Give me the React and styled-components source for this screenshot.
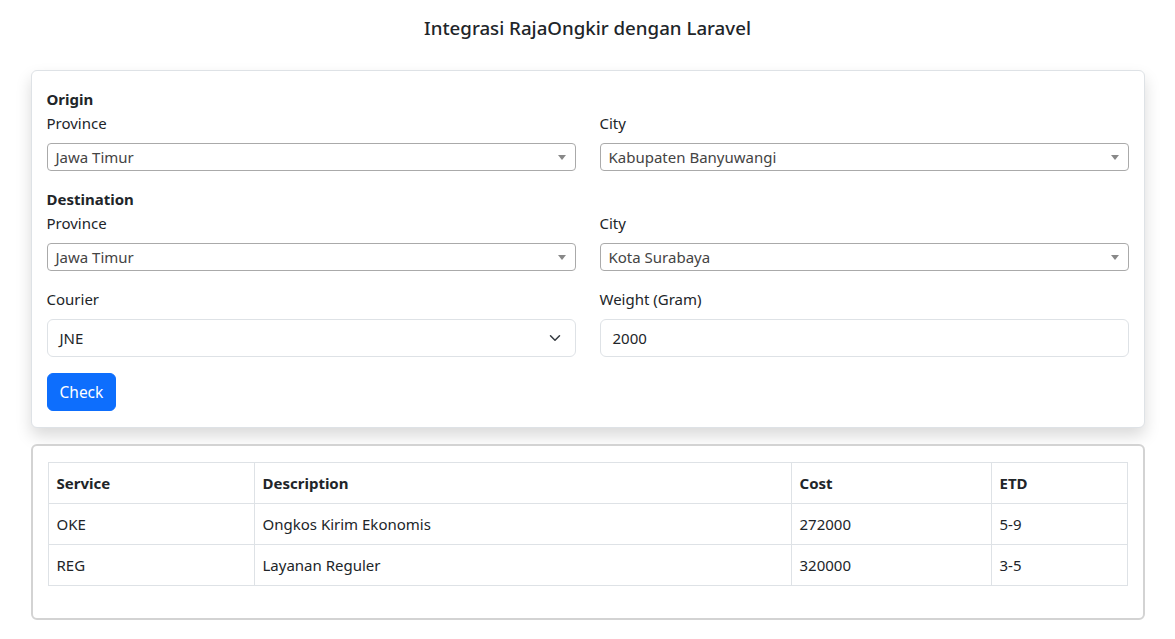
import React from "react";
import styled, { createGlobalStyle } from "styled-components";

const Global = createGlobalStyle`
  html, body { margin: 0; padding: 0; background: #fff; }
  body {
    font-family: "Noto Sans", "Open Sans", sans-serif;
    font-size: 15px;
    line-height: 24px;
    color: #212529;
  }
  * { box-sizing: border-box; }
`;

const Page = styled.div`
  width: 1114px;
  margin: 0 auto;
  padding-top: 16px;
`;

const Title = styled.h1`
  margin: 0 0 30px;
  text-align: center;
  font-size: 18.7px;
  font-weight: 500;
  line-height: 24px;
  color: #212529;
`;

const Card = styled.div`
  background: #fff;
  border: ${(p) => (p.$outline ? "2px solid #d3d3d3" : "1px solid #dee2e6")};
  border-radius: 6px;
  box-shadow: ${(p) => (p.$shadow ? "0 .5rem 1rem rgba(0,0,0,.15)" : "none")};
  padding: ${(p) => (p.$outline ? "16px 15px 16px" : "16px 15px")};
  margin-bottom: 16px;
`;

const Grid = styled.div`
  display: grid;
  grid-template-columns: 1fr 1fr;
  column-gap: 24px;
  margin-top: ${(p) => p.$mt || 0}px;
`;

const Heading = styled.div`
  font-weight: 700;
  margin-top: ${(p) => p.$mt || 0}px;
`;

const Field = styled.div`
  display: flex;
  flex-direction: column;
`;

const Label = styled.label`
  margin-bottom: 8px;
`;

const Select2 = styled.div`
  position: relative;
  height: 28px;
  border: 1px solid #aaa;
  border-radius: 4px;
  padding-left: 8px;
  line-height: 26px;
  color: #444;
  &::after {
    content: "";
    position: absolute;
    right: 9px;
    top: 11px;
    border-style: solid;
    border-width: 5px 4px 0 4px;
    border-color: #888 transparent transparent transparent;
  }
`;

const FormSelect = styled.div`
  height: 38px;
  border: 1px solid #dee2e6;
  border-radius: 6px;
  padding: 6px 12px;
  display: flex;
  align-items: center;
  justify-content: space-between;
`;

const Input = styled.div`
  height: 38px;
  border: 1px solid #dee2e6;
  border-radius: 6px;
  padding: 6px 12px;
  display: flex;
  align-items: center;
`;

const Button = styled.button`
  margin-top: 16px;
  height: 38px;
  padding: 0 12px;
  font: inherit;
  font-size: 15.5px;
  color: #fff;
  background: #0d6efd;
  border: 1px solid #0d6efd;
  border-radius: 6px;
  cursor: pointer;
`;

const Table = styled.table`
  width: 100%;
  border-collapse: collapse;
  margin-bottom: 16px;
`;

const Cell = styled.td`
  border: 1px solid #dee2e6;
  padding: 8px;
  height: 41px;
  font-weight: ${(p) => (p.$head ? 700 : 400)};
  width: ${(p) => p.$w || "auto"};
  text-align: left;
`;

const Chevron = () => (
  <svg width="16" height="12" viewBox="0 0 16 16" fill="none">
    <path d="m2 5 6 6 6-6" stroke="#343a40" strokeWidth="2" strokeLinecap="round" strokeLinejoin="round" />
  </svg>
);

const rows = [
  ["OKE", "Ongkos Kirim Ekonomis", "272000", "5-9"],
  ["REG", "Layanan Reguler", "320000", "3-5"],
];

export default function App() {
  return (
    <Page>
      <Global />
      <Title>Integrasi RajaOngkir dengan Laravel</Title>
      <Card $shadow>
        <Heading>Origin</Heading>
        <Grid>
          <Field>
            <Label>Province</Label>
            <Select2>Jawa Timur</Select2>
          </Field>
          <Field>
            <Label>City</Label>
            <Select2>Kabupaten Banyuwangi</Select2>
          </Field>
        </Grid>
        <Heading $mt={16}>Destination</Heading>
        <Grid>
          <Field>
            <Label>Province</Label>
            <Select2>Jawa Timur</Select2>
          </Field>
          <Field>
            <Label>City</Label>
            <Select2>Kota Surabaya</Select2>
          </Field>
        </Grid>
        <Grid $mt={16}>
          <Field>
            <Label>Courier</Label>
            <FormSelect>
              JNE
              <Chevron />
            </FormSelect>
          </Field>
          <Field>
            <Label>Weight (Gram)</Label>
            <Input>2000</Input>
          </Field>
        </Grid>
        <Button>Check</Button>
      </Card>
      <Card $outline>
        <Table>
          <thead>
            <tr>
              <Cell as="th" $head $w="206px">Service</Cell>
              <Cell as="th" $head $w="537px">Description</Cell>
              <Cell as="th" $head $w="200px">Cost</Cell>
              <Cell as="th" $head>ETD</Cell>
            </tr>
          </thead>
          <tbody>
            {rows.map((r) => (
              <tr key={r[0]}>
                {r.map((c, i) => (
                  <Cell key={i}>{c}</Cell>
                ))}
              </tr>
            ))}
          </tbody>
        </Table>
      </Card>
    </Page>
  );
}
